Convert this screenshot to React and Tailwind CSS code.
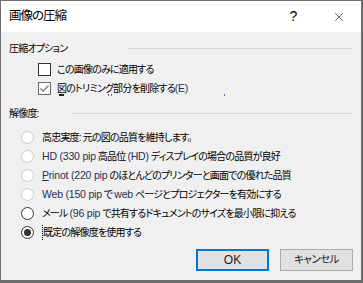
import { X } from 'lucide-react'

const font = "font-['Liberation_Sans','Noto_Sans_CJK_JP',sans-serif] [font-feature-settings:'palt']"
const txt = 'text-[10px] tracking-[-0.8px] text-black'

function Section({ label, labelWidth }) {
  return (
    <div className="flex items-center h-[16px]">
      <div className={`${labelWidth} shrink-0 ${txt}`}>{label}</div>
      <div className="flex-1 h-px bg-[#d7d7d7]" />
    </div>
  )
}

function Check({ checked, children }) {
  return (
    <div className="flex items-center h-[19px] pl-[29px] gap-[6px]">
      <div
        className={`w-[13px] h-[13px] border flex items-center justify-center ${
          checked ? 'border-[#6b6b6b] bg-[#fafafa]' : 'border-[#333333] bg-white'
        }`}
      >
        {checked && (
          <svg width="11" height="11" viewBox="0 0 11 11">
            <path d="M1.5 5.5 L4.2 8.2 L9.5 2.5" fill="none" stroke="#7a7a7a" strokeWidth="1.2" />
          </svg>
        )}
      </div>
      <span className={txt}>{children}</span>
    </div>
  )
}

function Radio({ state, children, focus }) {
  // state: disabled | enabled | selected
  const ring = state === 'disabled' ? 'border-[#cccccc]' : 'border-[#333333]'
  return (
    <div className="flex items-center h-[19px] pl-[12px] gap-[8px]">
      <div className={`w-[13px] h-[13px] rounded-full border bg-white flex items-center justify-center ${ring}`}>
        {state === 'selected' && <div className="w-[7px] h-[7px] rounded-full bg-[#333333]" />}
      </div>
      <span className={`${txt} ${focus ? 'border-l border-dotted border-black' : ''}`}>{children}</span>
    </div>
  )
}

// latin runs render a bit larger than the kana/kanji around them
const L = ({ children }) => (
  <span className="text-[10.5px] tracking-[-0.2px] text-[#27305a]">{children}</span>
)

export default function App() {
  return (
    <div className={`w-[363px] h-[283px] bg-[#6b6b6b] overflow-hidden ${font}`}>
      <div className="w-[362px] h-[281px] border border-[#707070] bg-[#f0f0f0] flex flex-col">
        {/* title bar */}
        <div className="h-[31px] bg-white flex items-center shrink-0">
          <span className="pl-[8px] text-[12.5px] tracking-[-1px] text-black flex-1">画像の圧縮</span>
          <div className="w-[45px] h-full flex items-center justify-center text-[14px] text-black font-['Liberation_Sans',sans-serif]">
            ?
          </div>
          <div className="w-[45px] h-full flex items-center justify-center">
            <X size={14} strokeWidth={1.1} color="#111" />
          </div>
        </div>

        <div className="flex flex-col px-[8px] pt-[8px]">
          <Section label="圧縮オプション" labelWidth="w-[119px]" />
          <div className="mt-[4px]">
            <Check>この画像のみに適用する</Check>
            <Check checked>
              図のトリミング部分を削除する<L>(E)</L>
            </Check>
          </div>
          <div className="h-[2px] overflow-hidden flex pl-[50px] gap-[44px] -mt-[4px]">
            <div className="w-[5px] h-[2px] bg-[#222]" />
            <div className="w-[4px] h-[2px] border-l border-r border-[#6c5fb0]" />
            <div className="ml-[68px] w-[1px] h-[2px] bg-[#5a6fb8]" />
          </div>

          <div className="mt-[9px]">
            <Section label="解像度:" labelWidth="w-[64px]" />
          </div>
          <div className="mt-[7px]">
            <Radio state="disabled">高忠実度: 元の図の品質を維持します。</Radio>
            <Radio state="disabled">
              <L>HD (330 pip</L> 高品位 <L>(HD)</L> ディスプレイの場合の品質が良好
            </Radio>
            <Radio state="disabled">
              <L>
                <span className="underline">P</span>rinot (220 pip
              </L>{' '}
              のほとんどのプリンターと画面での優れた品質
            </Radio>
            <Radio state="disabled">
              <L>Web (150 pip</L> で <L>web</L> ページとプロジェクターを有効にする
            </Radio>
            <Radio state="enabled">
              メール <L>(96 pip</L> で共有するドキュメントのサイズを最小限に抑える
            </Radio>
            <Radio state="selected" focus>
              既定の解像度を使用する
            </Radio>
          </div>

          <div className="flex justify-end gap-[11px] mt-[7px]">
            <button className="w-[73px] h-[22px] border-2 border-[#0078d7] bg-[#e1e1e1] text-[12px] text-[#222]">
              OK
            </button>
            <button className="w-[73px] h-[22px] border border-[#adadad] bg-[#e1e1e1] text-[10.5px] tracking-[-0.6px] text-[#222]">
              キャンセル
            </button>
          </div>
        </div>
      </div>
    </div>
  )
}
